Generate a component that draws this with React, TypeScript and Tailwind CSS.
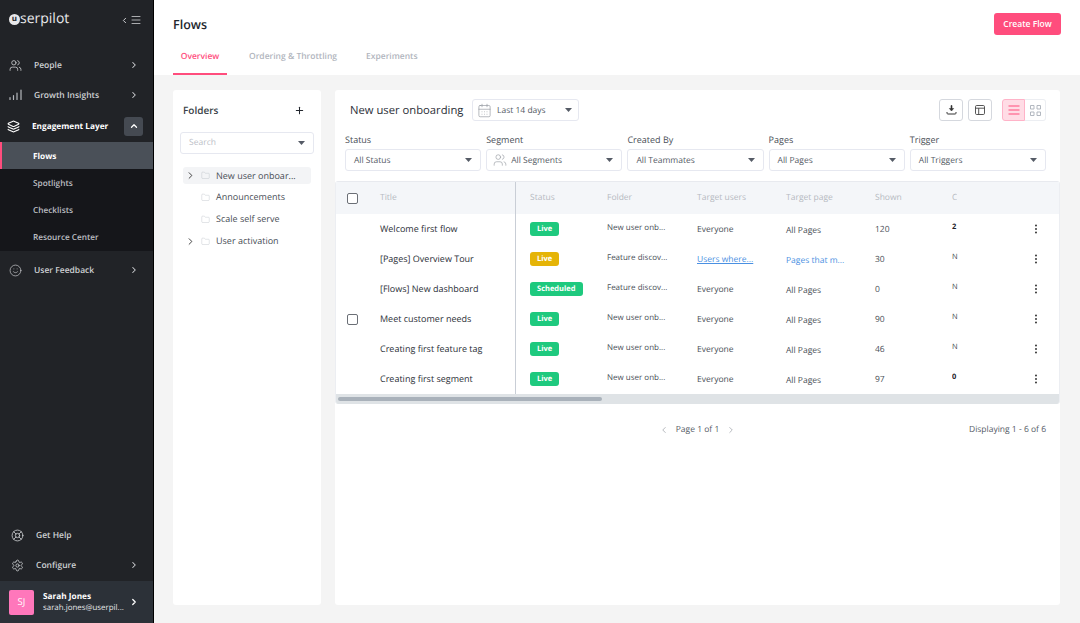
import { ChevronRight, ChevronLeft, ChevronUp, Plus, Menu, MoreVertical, Users, Layers, Smile, LifeBuoy, Settings, Folder, CalendarDays } from 'lucide-react';

const font = { fontFamily: '"Open Sans", sans-serif' };

function Caret() {
  return (
    <svg width="7" height="4" viewBox="0 0 7 4" className="ml-auto shrink-0">
      <path d="M0 0h7L3.5 4z" fill="#555b66" />
    </svg>
  );
}

function NavItem({ icon, label, chevron = true }: { icon: React.ReactNode; label: string; chevron?: boolean }) {
  return (
    <div className="flex h-[30px] items-center pl-[9px] pr-[14px] text-[#cfd1d4]">
      <span className="flex w-[25px] shrink-0 items-center">{icon}</span>
      <span className="translate-y-[0.5px] text-[8.5px] font-semibold">{label}</span>
      {chevron && <ChevronRight size={10} strokeWidth={2.5} className="ml-auto" />}
    </div>
  );
}

function BarsIcon() {
  return (
    <svg width="14" height="12" viewBox="0 0 14 12" stroke="#b4b7bc" strokeWidth="1.2" strokeLinecap="round">
      <path d="M1 10.5V8.5M4.5 10.5V6.5M8 10.5V4M12 10.5V1" />
    </svg>
  );
}

function Filter({ label, value, icon }: { label: string; value: string; icon?: React.ReactNode }) {
  return (
    <div className="flex flex-col">
      <span className="mb-[3px] text-[9px] leading-[12px] text-[#4a4f57]">{label}</span>
      <div className="flex h-[22px] items-center rounded-[3px] border border-[#e6e8f0] pl-[8px] pr-[8px] text-[8.5px] text-[#555b66]">
        {icon}
        <span className="translate-y-[1px]">{value}</span>
        <Caret />
      </div>
    </div>
  );
}

function FolderRow({ label, expand, active }: { label: string; expand?: boolean; active?: boolean }) {
  return (
    <div className={`flex h-[17px] w-[128px] items-center rounded-[3px] text-[9px] text-[#4a4f57] ${active ? 'bg-[#f3f4f6]' : ''}`}>
      <span className="flex w-[14px] justify-center">
        {expand && <ChevronRight size={11} strokeWidth={2} className="text-[#333]" />}
      </span>
      <Folder size={9} strokeWidth={1} className="ml-[4px] mr-[6px] text-[#b5b9c0]" />
      <span className={active ? '' : '-translate-y-[1px]'}>{label}</span>
    </div>
  );
}

type Row = {
  title: string;
  check?: boolean;
  status: string;
  color: string;
  folder: string;
  users: string;
  page: string;
  shown: string;
  c: string;
  bold?: boolean;
  link?: boolean;
};

const rows: Row[] = [
  { title: 'Welcome first flow', status: 'Live', color: 'bg-[#1ec97e]', folder: 'New user onb...', users: 'Everyone', page: 'All Pages', shown: '120', c: '2', bold: true },
  { title: '[Pages] Overview Tour', status: 'Live', color: 'bg-[#e5b407]', folder: 'Feature discov...', users: 'Users where...', page: 'Pages that m...', shown: '30', c: 'N', link: true },
  { title: '[Flows] New dashboard', status: 'Scheduled', color: 'bg-[#1ec97e]', folder: 'Feature discov...', users: 'Everyone', page: 'All Pages', shown: '0', c: 'N' },
  { title: 'Meet customer needs', check: true, status: 'Live', color: 'bg-[#1ec97e]', folder: 'New user onb...', users: 'Everyone', page: 'All Pages', shown: '90', c: 'N' },
  { title: 'Creating first feature tag', status: 'Live', color: 'bg-[#1ec97e]', folder: 'New user onb...', users: 'Everyone', page: 'All Pages', shown: '46', c: 'N' },
  { title: 'Creating first segment', status: 'Live', color: 'bg-[#1ec97e]', folder: 'New user onb...', users: 'Everyone', page: 'All Pages', shown: '97', c: '0', bold: true },
];

const gridCols = 'grid grid-cols-[180px_14px_77px_90px_89px_89px_77px_8px_1fr] items-center';

function Checkbox() {
  return <span className="block h-[11px] w-[11px] rounded-[2px] border border-[#6b6f76] bg-white" />;
}

export default function App() {
  return (
    <div className="flex h-[623px] w-[1080px] overflow-hidden bg-[#f4f4f4] [text-rendering:geometricPrecision]" style={font}>
      <aside className="flex h-full w-[154px] shrink-0 flex-col border-r border-black bg-[#212327]">
        <div className="flex h-[50px] items-start justify-between pl-[9px] pr-[11px] pt-[11px]">
          <div className="flex items-center text-[14px] leading-[16px] text-[#e8e8ea]">
            <span className="flex h-[11px] w-[11px] items-center justify-center rounded-full bg-[#e8e8ea] text-[8px] font-bold leading-none text-[#212327]">u</span>
            serpilot
          </div>
          <div className="mt-[3px] flex items-center gap-[1px] text-[#d8d9dc]">
            <ChevronLeft size={9} strokeWidth={2.5} />
            <Menu size={12} strokeWidth={1.5} />
          </div>
        </div>
        <div>
          <NavItem icon={<Users size={13} strokeWidth={1.5} />} label="People" />
          <NavItem icon={<BarsIcon />} label="Growth Insights" />
        </div>
        <div className="flex h-[32px] items-center pl-[7px] pr-[10px] text-white">
          <span className="flex w-[25px] items-center"><Layers size={13} strokeWidth={2} /></span>
          <span className="translate-y-[0.5px] text-[8.25px] font-bold">Engagement Layer</span>
          <span className="ml-auto flex h-[19px] w-[19px] items-center justify-center rounded-[3px] bg-[#454a52]">
            <ChevronUp size={10} strokeWidth={3} />
          </span>
        </div>
        <div className="bg-[#15161a] pb-[1px] text-[8.25px] font-semibold text-[#bcbec2]">
          <div className="flex h-[27px] items-center border-l-2 border-[#ff4d7d] bg-[#4a5058] pl-[31px] pt-[4px] font-bold text-white">Flows</div>
          <div className="flex h-[27px] items-center pl-[33px] pt-[4px]">Spotlights</div>
          <div className="flex h-[27px] items-center pl-[33px] pt-[4px]">Checklists</div>
          <div className="flex h-[27px] items-center pl-[33px] pt-[4px]">Resource Center</div>
        </div>
        <div className="pt-[4px]">
          <NavItem icon={<Smile size={13} strokeWidth={1.25} />} label="User Feedback" />
        </div>
        <div className="mt-auto">
          <div className="pl-[2px]">
            <NavItem icon={<LifeBuoy size={13} strokeWidth={1.5} />} label="Get Help" chevron={false} />
          </div>
          <div className="pl-[2px]">
            <NavItem icon={<Settings size={13} strokeWidth={1.5} />} label="Configure" />
          </div>
          <div className="mt-[1px] flex h-[42px] items-center bg-[#2c3138] pl-[9px] pr-[14px]">
            <span className="flex h-[25px] w-[25px] items-center justify-center rounded-[2px] bg-[#ff77bb] text-[9.5px] text-white">SJ</span>
            <div className="ml-[9px] flex flex-col text-white">
              <span className="text-[8.25px] font-bold leading-[13px]">Sarah Jones</span>
              <span className="text-[7.9px] leading-[11px] text-[#e4e5e7]">sarah.jones@userpil...</span>
            </div>
            <ChevronRight size={10} strokeWidth={3} className="ml-auto text-white" />
          </div>
        </div>
      </aside>

      <div className="flex min-w-0 flex-1 flex-col">
        <header className="relative h-[75px] bg-white px-[19px]">
          <div className="flex h-[47px] items-center justify-between">
            <h1 className="pt-[3px] text-[12.5px] font-semibold text-[#23272e]">Flows</h1>
            <button className="h-[22px] w-[67px] rounded-[3px] bg-[#ff4d7d] pt-[1px] text-[8.5px] font-semibold text-white">Create Flow</button>
          </div>
          <nav className="flex text-[8.5px] font-semibold text-[#b1b5bd]">
            <span className="flex h-[28px] w-[54px] items-start justify-center border-b-2 border-[#ff4d7d] pt-[4px] text-[#ff4d7d]">Overview</span>
            <span className="ml-[22px] pt-[4px]">Ordering &amp; Throttling</span>
            <span className="ml-[29px] pt-[4px]">Experiments</span>
          </nav>
        </header>

        <main className="flex flex-1 gap-[14px] pb-[18px] pl-[19px] pr-[20px] pt-[15px]">
          <section className="w-[148px] shrink-0 rounded-[3px] bg-white px-[7px]">
            <div className="flex h-[42px] items-center justify-between px-[3px] pb-[1px] text-[#23272e]">
              <span className="text-[10px] font-semibold text-[#3a3f47]">Folders</span>
              <Plus size={11} strokeWidth={2.2} className="mr-[6px]" />
            </div>
            <div className="flex h-[22px] items-center rounded-[3px] border border-[#e6e8f0] pl-[8px] pr-[8px] text-[8.5px] text-[#bcc0c7]">
              Search
              <Caret />
            </div>
            <div className="mt-[13px] flex flex-col gap-[5px] pl-[3px]">
              <FolderRow label="New user onboar..." expand active />
              <FolderRow label="Announcements" />
              <FolderRow label="Scale self serve" />
              <FolderRow label="User activation" expand />
            </div>
          </section>

          <section className="flex min-w-0 flex-1 flex-col rounded-[3px] bg-white">
            <div className="flex h-[38px] items-center pl-[15px] pr-[14px] pt-[2px]">
              <span className="w-[113px] translate-y-[1px] whitespace-nowrap text-[11.25px] text-[#2c3038]">New user onboarding</span>
              <div className="ml-[9px] flex h-[22px] w-[107px] items-center rounded-[3px] border border-[#e6e8f0] pl-[4px] pr-[6px] text-[8.5px] text-[#555b66]">
                <CalendarDays size={15} strokeWidth={1} className="mr-[5px] text-[#8b9098]" />
                <span className="translate-y-[1px]">Last 14 days</span>
                <Caret />
              </div>
              <div className="ml-auto flex items-center">
                <span className="flex h-[22px] w-[24px] items-center justify-center rounded-[3px] border border-[#d5d8de]">
                  <svg width="11" height="10" viewBox="0 0 11 10" fill="#333" stroke="#333" strokeWidth="0.6"><path d="M5 0.5h1v3h1.6L5.5 6 3.4 3.5H5z" /><path d="M1 7v1.2c0 .5.4.8.8.8h7.4c.4 0 .8-.3.8-.8V7" fill="none" strokeWidth="1" /></svg>
                </span>
                <span className="ml-[5px] flex h-[22px] w-[24px] items-center justify-center rounded-[3px] border border-[#d5d8de]">
                  <svg width="10" height="10" viewBox="0 0 10 10" fill="none" stroke="#444" strokeWidth="0.9"><rect x="0.5" y="0.5" width="9" height="9" rx="1.2" /><path d="M0.5 3.2h9M3.7 3.2v6.3" /></svg>
                </span>
                <span className="ml-[10px] flex h-[22px] w-[23px] items-center justify-center rounded-l-[3px] border border-[#ffb3c8] bg-[#ffdce5]">
                  <svg width="12" height="10" viewBox="0 0 12 10" fill="none" stroke="#ff4d7d" strokeWidth="1.2"><path d="M0.5 1h11M0.5 5h11M0.5 9h11" /></svg>
                </span>
                <span className="flex h-[22px] w-[21px] items-center justify-center rounded-r-[3px] border border-l-0 border-[#eceef2]">
                  <svg width="11" height="11" viewBox="0 0 11 11" fill="none" stroke="#aab0b9" strokeWidth="0.9"><path d="M0.5 0.5h3.5v3.5h-3.5zM7 0.5h3.5v3.5h-3.5zM0.5 7h3.5v3.5h-3.5zM7 7h3.5v3.5h-3.5z" /></svg>
                </span>
              </div>
            </div>

            <div className="mt-[6px] grid grid-cols-5 gap-[5px] pl-[10px] pr-[14px]">
              <Filter label="Status" value="All Status" />
              <Filter label="Segment" value="All Segments" icon={<Users size={14} strokeWidth={1} className="-ml-[2px] mr-[4px] text-[#8b9098]" />} />
              <Filter label="Created By" value="All Teammates" />
              <Filter label="Pages" value="All Pages" />
              <Filter label="Trigger" value="All Triggers" />
            </div>

            <div className="mt-[10px] overflow-hidden rounded-[3px] border-x border-[#eceef2]">
              <div className={`${gridCols} h-[33px] border-t border-[#e8eaef] bg-[#f4f6f9] text-[8.5px] text-[#b6bac1]`}>
                <div className="flex h-full items-center border-r border-[#c9ced6] pl-[11px]">
                  <Checkbox />
                  <span className="ml-[22px]">Title</span>
                </div>
                <span />
                <span>Status</span>
                <span>Folder</span>
                <span>Target users</span>
                <span>Target page</span>
                <span>Shown</span>
                <span className="w-[5px] overflow-hidden">Ca</span>
                <span />
              </div>
              {rows.map((r) => (
                <div key={r.title} className={`${gridCols} h-[30px] text-[8.5px] text-[#4a4f57]`}>
                  <div className="flex h-full items-center border-r border-[#c9ced6] pl-[11px] text-[9px] text-[#2c3038]">
                    <span className="w-[11px]">{r.check && <Checkbox />}</span>
                    <span className="ml-[22px]">{r.title}</span>
                  </div>
                  <span />
                  <span className="flex">
                    <span className={`rounded-[3px] px-[7px] text-[7.5px] font-bold leading-[14px] text-white ${r.color}`}>{r.status}</span>
                  </span>
                  <span className="-translate-y-[1px] text-[8px]">{r.folder}</span>
                  <span className={`translate-y-[1px] ${r.link ? 'text-[#4a90e2] underline' : ''}`}>{r.users}</span>
                  <span className={`translate-y-[2px] ${r.link ? 'text-[#4a90e2]' : ''}`}>{r.page}</span>
                  <span className="translate-y-[1px]">{r.shown}</span>
                  <span className={`w-[8px] -translate-y-[1px] overflow-hidden text-[7.5px] ${r.bold ? 'font-bold text-[#1f2329]' : ''}`}>{r.c}</span>
                  <span className="flex justify-end pr-[17px]"><MoreVertical size={12} strokeWidth={2.2} className="text-[#444]" /></span>
                </div>
              ))}
              <div className="h-[10px] bg-[#dfe3e6] pl-[2px] pt-[3px]">
                <div className="h-[4px] w-[264px] rounded-full bg-[#a9b1ba]" />
              </div>
            </div>

            <div className="relative mt-[20px] flex h-[12px] items-center justify-center text-[8.5px] text-[#555b66]">
              <ChevronLeft size={10} strokeWidth={1.5} className="mr-[7px] text-[#8b9098]" />
              Page 1 of 1
              <ChevronRight size={10} strokeWidth={1.5} className="ml-[7px] text-[#8b9098]" />
              <span className="absolute right-[14px]">Displaying 1 - 6 of 6</span>
            </div>
          </section>
        </main>
      </div>
    </div>
  );
}
